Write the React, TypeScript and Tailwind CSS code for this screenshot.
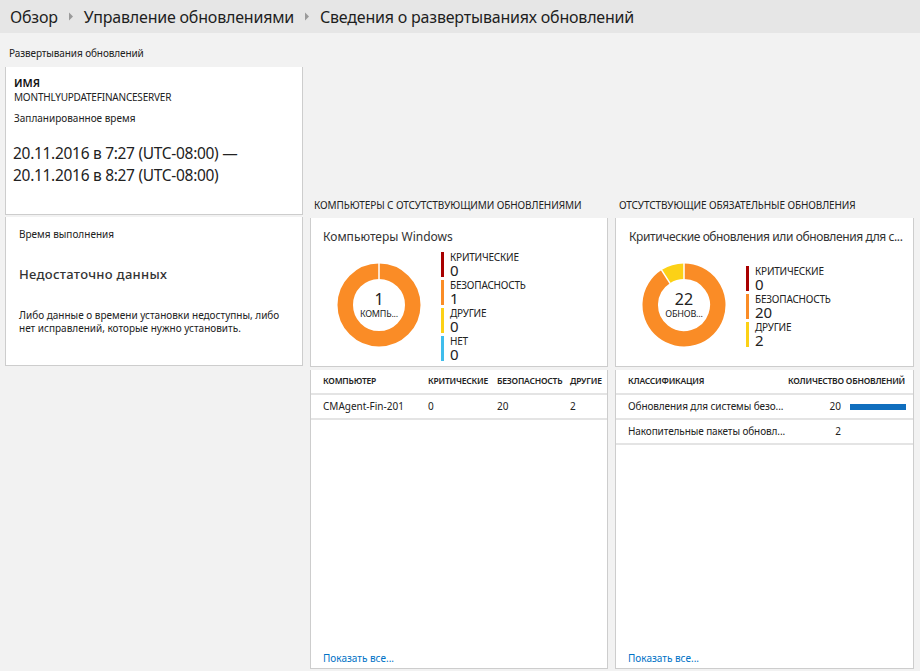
import React from 'react';

const ORANGE = '#fa8c26';
const RED = '#a80000';
const YELLOW = '#fcd116';
const CYAN = '#3fbdec';

function arc(cx: number, cy: number, r: number, a0: number, a1: number) {
    const p = (a: number) => {
        const rad = ((a - 90) * Math.PI) / 180;
        return [cx + r * Math.cos(rad), cy + r * Math.sin(rad)];
    };
    const [x0, y0] = p(a0);
    const [x1, y1] = p(a1);
    const large = a1 - a0 > 180 ? 1 : 0;
    return `M ${x0} ${y0} A ${r} ${r} 0 ${large} 1 ${x1} ${y1}`;
}

function Donut({ segments, value, label }: { segments: { v: number; c: string }[]; value: string; label: string }) {
    const total = segments.reduce((s, x) => s + x.v, 0);
    let acc = 0;
    const cx = 42;
    const cy = 42;
    const r = 33.75;
    const cuts: number[] = [];
    const parts = segments
        .filter((s) => s.v > 0)
        .map((s, i) => {
            const a0 = (acc / total) * 360;
            acc += s.v;
            const a1 = (acc / total) * 360;
            cuts.push(a0);
            if (a1 - a0 >= 359.99) {
                return <circle key={i} cx={cx} cy={cy} r={r} fill="none" stroke={s.c} strokeWidth={15.5} />;
            }
            return <path key={i} d={arc(cx, cy, r, a0, a1)} fill="none" stroke={s.c} strokeWidth={15.5} />;
        });
    return (
        <div className="relative w-[84px] h-[84px] shrink-0">
            <svg width="84" height="84" viewBox="0 0 84 84">
                {parts}
                {cuts.map((a, i) => {
                    const rad = ((a - 90) * Math.PI) / 180;
                    return (
                        <line
                            key={i}
                            x1={cx + 25.5 * Math.cos(rad)}
                            y1={cy + 25.5 * Math.sin(rad)}
                            x2={cx + 42 * Math.cos(rad)}
                            y2={cy + 42 * Math.sin(rad)}
                            stroke="#fff"
                            strokeWidth={1.5}
                        />
                    );
                })}
            </svg>
            <div className="absolute inset-0 flex flex-col items-center justify-center text-[#222]">
                <div className="text-[16px] leading-[16px]">{value}</div>
                <div className="text-[9px] leading-[11px] mt-[1px] tracking-[-0.2px]">{label}</div>
            </div>
        </div>
    );
}

function Legend({ items }: { items: { name: string; v: string; c: string }[] }) {
    return (
        <div className="flex flex-col gap-[2px]">
            {items.map((it) => (
                <div key={it.name} className="flex h-[26px]">
                    <div className="w-[3px] h-[25px]" style={{ background: it.c }} />
                    <div className="pl-[6px] flex flex-col">
                        <div className="text-[10px] leading-[11px] text-[#222] tracking-[-0.2px]">{it.name}</div>
                        <div className="text-[15px] leading-[15px] text-[#222]">{it.v}</div>
                    </div>
                </div>
            ))}
        </div>
    );
}

function Card({ className = '', children }: { className?: string; children: React.ReactNode }) {
    return <div className={`bg-white border-x border-b border-[#cdcdcd] ${className}`}>{children}</div>;
}

function SectionLabel({ children }: { children: React.ReactNode }) {
    return <div className="h-[12px] text-[10px] leading-[12px] text-[#222] pl-[4px] whitespace-nowrap tracking-[-0.1px]">{children}</div>;
}

function Chevron() {
    return (
        <svg width="6" height="9" viewBox="0 0 6 9" className="mx-[10px]">
            <path d="M1 0.5 L5 4.5 L1 8.5 Z" fill="#9a9a9a" />
        </svg>
    );
}

export default function App() {
    return (
        <div className="w-[920px] h-[671px] bg-[#f2f2f2] overflow-hidden" style={{ fontFamily: '"Noto Sans", "Open Sans", sans-serif' }}>
            <div className="h-[33px] bg-[#e6e6e6] flex items-center pl-[10px] text-[16px] text-[#1e1e1e] tracking-[-0.2px]">
                <span>Обзор</span>
                <Chevron />
                <span>Управление обновлениями</span>
                <Chevron />
                <span>Сведения о развертываниях обновлений</span>
            </div>

            <div className="flex gap-[7px] pl-[5px]">
                {/* left column */}
                <div className="w-[298px] shrink-0 pt-[14px]">
                    <SectionLabel>Развертывания обновлений</SectionLabel>
                    <Card className="mt-[8px] h-[148px] px-[8px] pt-[10px]">
                        <div className="text-[11px] leading-[12px] font-semibold text-[#111]">ИМЯ</div>
                        <div className="text-[10px] leading-[13px] text-[#222] mt-[2px] tracking-[-0.2px]">MONTHLYUPDATEFINANCESERVER</div>
                        <div className="text-[10px] leading-[13px] text-[#222] mt-[8px]">Запланированное время</div>
                        <div className="text-[15.5px] leading-[22px] text-[#222] mt-[17px] -ml-[1px] tracking-[-0.3px]">
                            20.11.2016 в 7:27 (UTC-08:00) —<br />
                            20.11.2016 в 8:27 (UTC-08:00)
                        </div>
                    </Card>
                    <Card className="mt-[2px] h-[149px] px-[13px] pt-[11px]">
                        <div className="text-[10px] leading-[13px] text-[#222]">Время выполнения</div>
                        <div className="text-[13px] leading-[18px] text-[#333] mt-[24px] tracking-[0.3px] font-medium">Недостаточно данных</div>
                        <div className="text-[10px] leading-[13px] text-[#222] mt-[26px]">
                            Либо данные о времени установки недоступны, либо
                            <br />
                            нет исправлений, которые нужно установить.
                        </div>
                    </Card>
                </div>

                {/* middle column */}
                <div className="w-[298px] shrink-0 pt-[166px]">
                    <SectionLabel>КОМПЬЮТЕРЫ С ОТСУТСТВУЮЩИМИ ОБНОВЛЕНИЯМИ</SectionLabel>
                    <Card className="mt-[7px] h-[149px] pt-[10px]">
                        <div className="pl-[12px] text-[12px] leading-[18px] text-[#333]">Компьютеры Windows</div>
                        <div className="flex items-start pl-[26px] mt-[6px]">
                            <div className="mt-[11px]">
                                <Donut segments={[{ v: 1, c: ORANGE }]} value="1" label="КОМПЬ..." />
                            </div>
                            <div className="ml-[20px]">
                                <Legend
                                    items={[
                                        { name: 'КРИТИЧЕСКИЕ', v: '0', c: RED },
                                        { name: 'БЕЗОПАСНОСТЬ', v: '1', c: ORANGE },
                                        { name: 'ДРУГИЕ', v: '0', c: YELLOW },
                                        { name: 'НЕТ', v: '0', c: CYAN },
                                    ]}
                                />
                            </div>
                        </div>
                    </Card>
                    <Card className="mt-[3px] h-[299px] flex flex-col">
                        <div className="h-[25px] flex items-center pl-[12px] text-[8.5px] font-semibold text-[#222] tracking-[-0.2px] border-b-2 border-[#e4e4e4] whitespace-nowrap">
                            <div className="w-[105px]">КОМПЬЮТЕР</div>
                            <div className="w-[69px]">КРИТИЧЕСКИЕ</div>
                            <div className="w-[73px]">БЕЗОПАСНОСТЬ</div>
                            <div>ДРУГИЕ</div>
                        </div>
                        <div className="h-[25px] flex items-center pl-[12px] text-[10px] text-[#222] border-b-2 border-[#e4e4e4]">
                            <div className="w-[105px]">CMAgent-Fin-201</div>
                            <div className="w-[69px]">0</div>
                            <div className="w-[73px]">20</div>
                            <div>2</div>
                        </div>
                        <div className="flex-1" />
                        <div className="pl-[12px] pb-[3px] text-[10px] leading-[13px] text-[#0072c6]">Показать все...</div>
                    </Card>
                </div>

                {/* right column */}
                <div className="w-[299px] shrink-0 pt-[166px]">
                    <SectionLabel>ОТСУТСТВУЮЩИЕ ОБЯЗАТЕЛЬНЫЕ ОБНОВЛЕНИЯ</SectionLabel>
                    <Card className="mt-[7px] h-[149px] pt-[10px]">
                        <div className="pl-[13px] pr-[4px] text-[12px] leading-[18px] text-[#333] whitespace-nowrap overflow-hidden text-ellipsis tracking-[-0.4px]">
                            Критические обновления или обновления для с...
                        </div>
                        <div className="flex items-start pl-[26px] mt-[17px]">
                            <Donut
                                segments={[
                                    { v: 0, c: RED },
                                    { v: 20, c: ORANGE },
                                    { v: 2, c: YELLOW },
                                ]}
                                value="22"
                                label="ОБНОВ..."
                            />
                            <div className="ml-[20px] mt-[3px]">
                                <Legend
                                    items={[
                                        { name: 'КРИТИЧЕСКИЕ', v: '0', c: RED },
                                        { name: 'БЕЗОПАСНОСТЬ', v: '20', c: ORANGE },
                                        { name: 'ДРУГИЕ', v: '2', c: YELLOW },
                                    ]}
                                />
                            </div>
                        </div>
                    </Card>
                    <Card className="mt-[3px] h-[299px] flex flex-col">
                        <div className="h-[25px] flex items-center pl-[12px] pr-[8px] text-[8.5px] font-semibold text-[#222] tracking-[-0.2px] border-b-2 border-[#e4e4e4]">
                            <div className="flex-1">КЛАССИФИКАЦИЯ</div>
                            <div>КОЛИЧЕСТВО ОБНОВЛЕНИЙ</div>
                        </div>
                        {[
                            { name: 'Обновления для системы безо...', v: 20 },
                            { name: 'Накопительные пакеты обновл...', v: 2 },
                        ].map((r) => (
                            <div key={r.name} className="h-[25px] flex items-center pl-[12px] text-[10px] text-[#222] border-b-2 border-[#e4e4e4]">
                                <div className="w-[200px] tracking-[-0.1px]">{r.name}</div>
                                <div className="w-[13px] text-right">{r.v}</div>
                                <div className="ml-[9px] w-[56px] h-[6px]">
                                    <div className="h-full bg-[#106ebe]" style={{ width: r.v === 20 ? '56px' : '0px' }} />
                                </div>
                            </div>
                        ))}
                        <div className="flex-1" />
                        <div className="pl-[12px] pb-[3px] text-[10px] leading-[13px] text-[#0072c6]">Показать все...</div>
                    </Card>
                </div>
            </div>
        </div>
    );
}
